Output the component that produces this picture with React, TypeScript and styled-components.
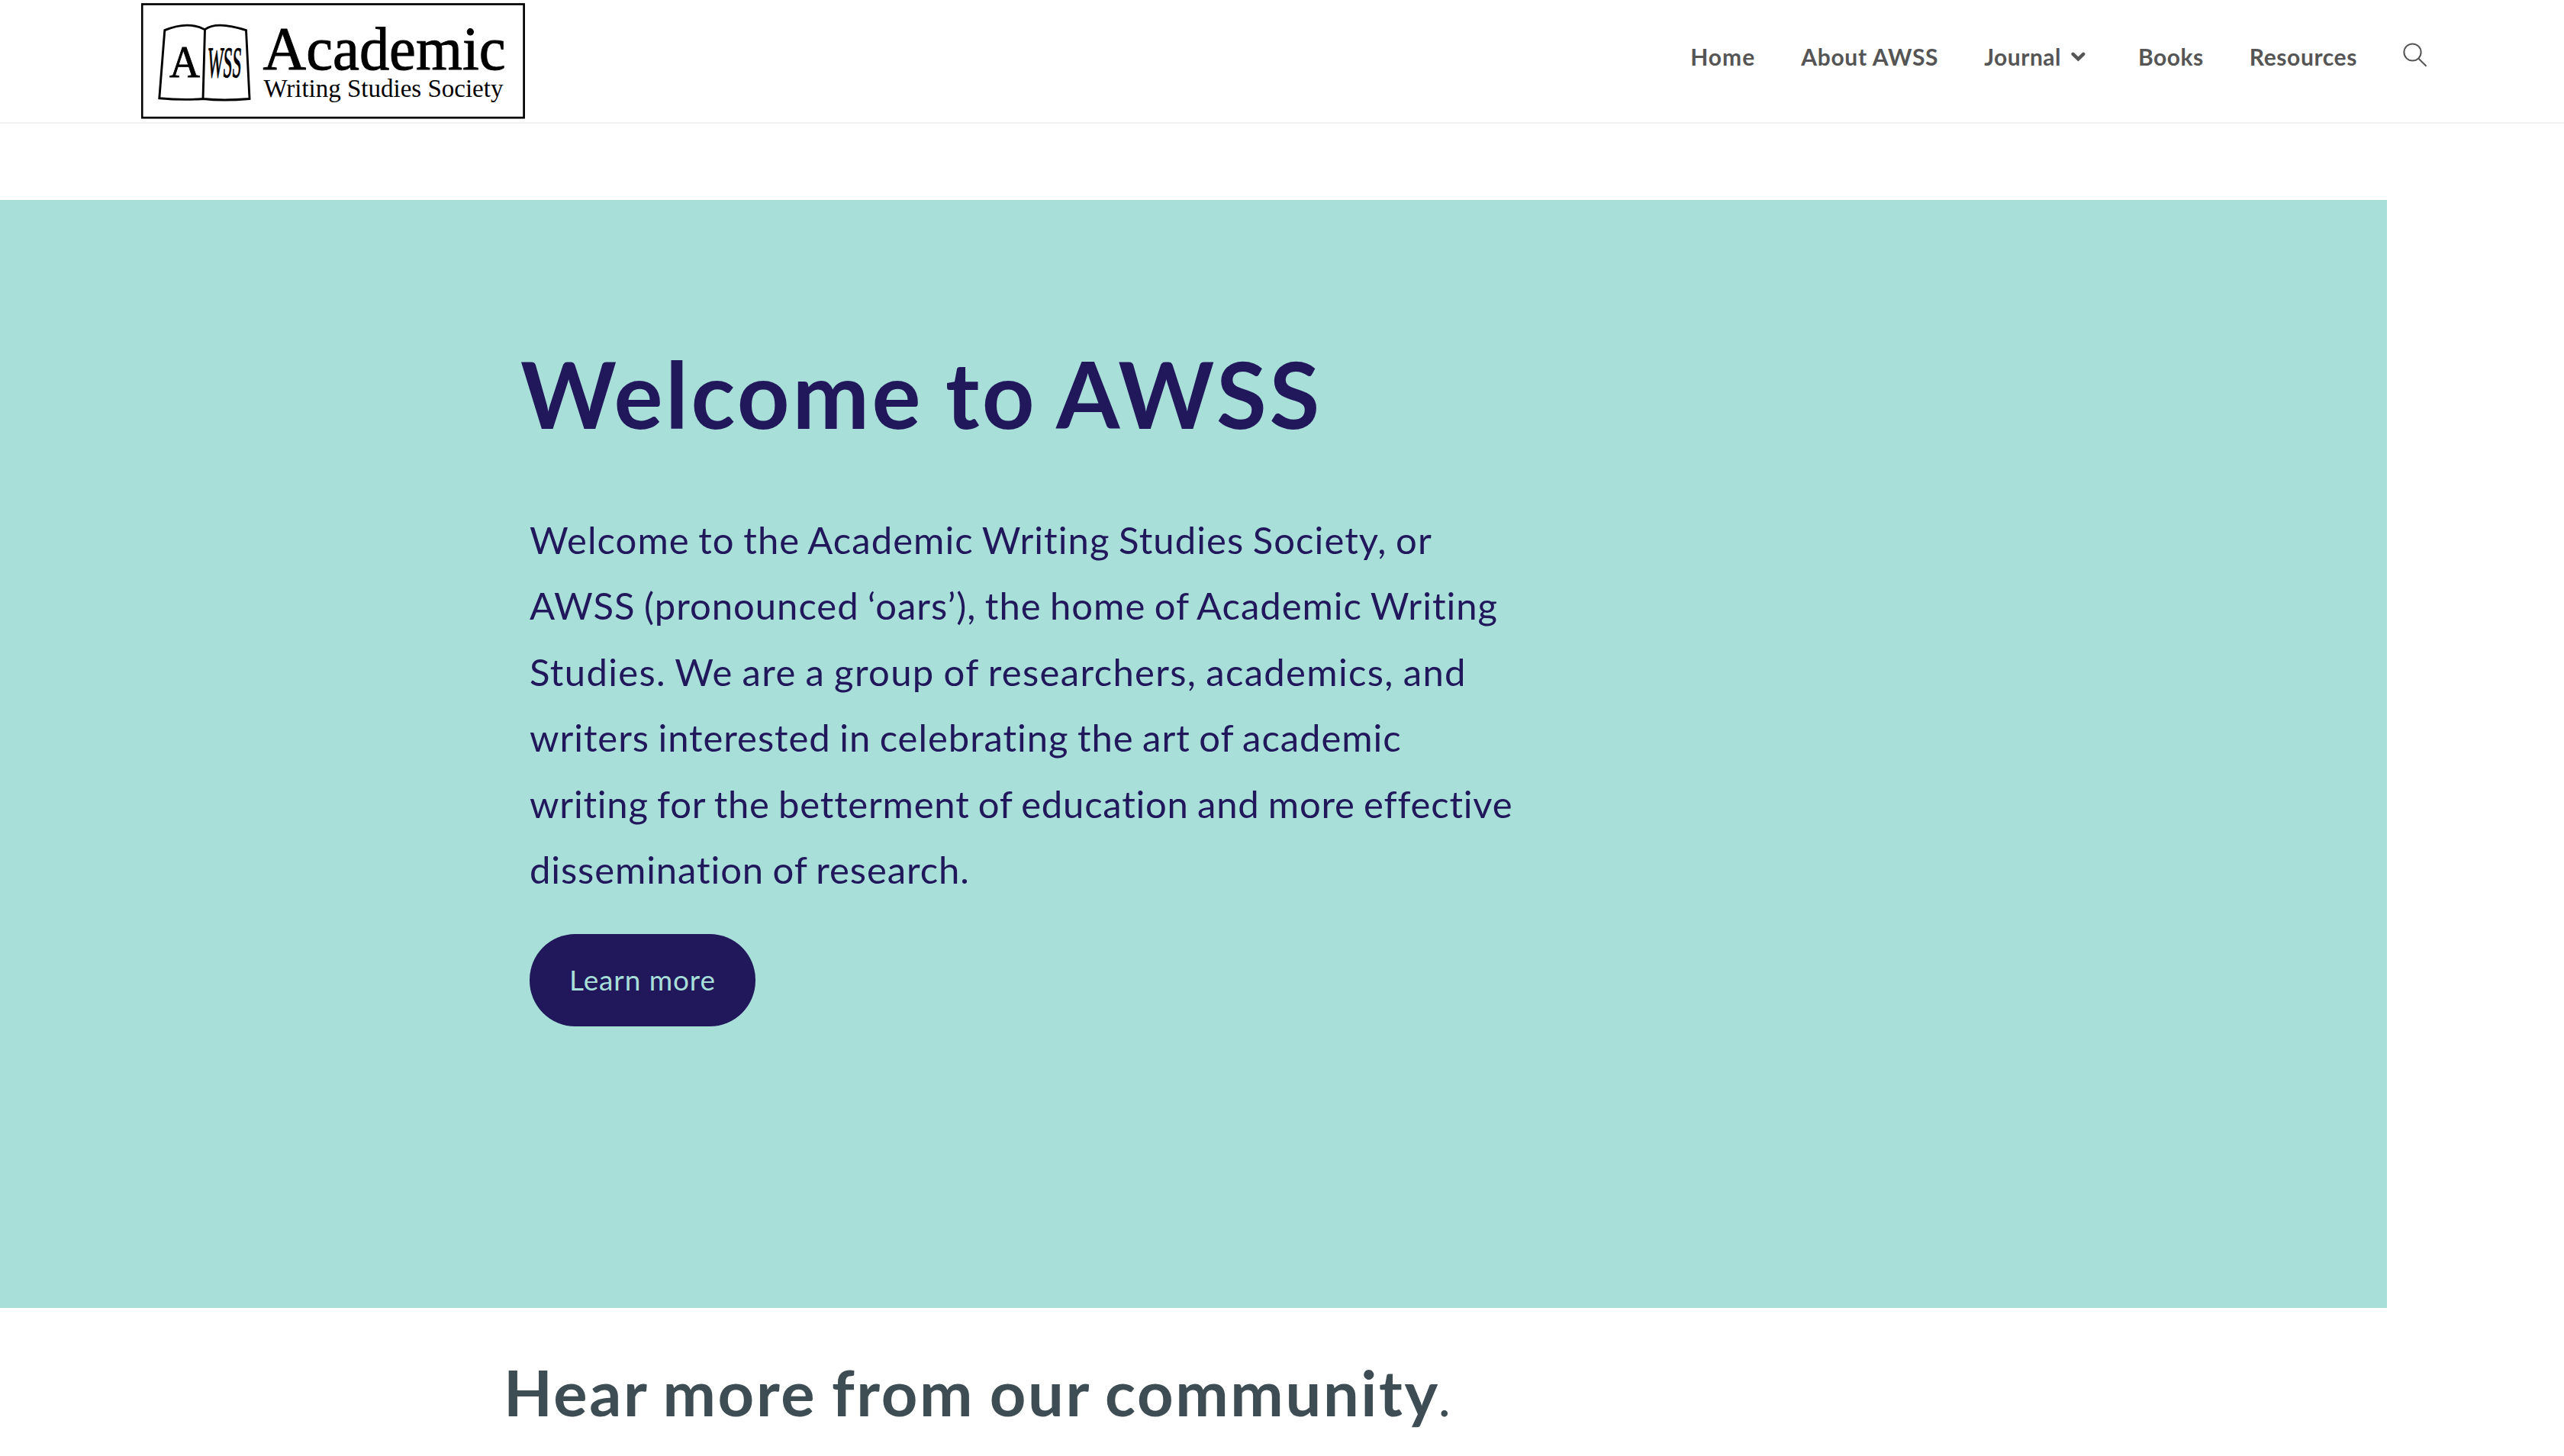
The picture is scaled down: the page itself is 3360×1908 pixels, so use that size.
import styled, { createGlobalStyle } from "styled-components"

const links = [
    { label: 'Home', spacing: 1 },
    { label: 'About AWSS', spacing: 0.7 },
    { label: 'Journal', spacing: 0.5, dropdown: true },
    { label: 'Books', spacing: 0.5 },
    { label: 'Resources', spacing: 0.6 },
]

const intro = [
    { text: 'Welcome to the Academic Writing Studies Society, or', spacing: 1.06 },
    { text: 'AWSS (pronounced ‘oars’), the home of Academic Writing', spacing: 0.97 },
    { text: 'Studies. We are a group of researchers, academics, and', spacing: 1.34 },
    { text: 'writers interested in celebrating the art of academic', spacing: 0.95 },
    { text: 'writing for the betterment of education and more effective', spacing: 0.78 },
    { text: 'dissemination of research.', spacing: 0.9 },
]

const Logo: React.FC = () => {
    return (
        <LogoSvg viewBox="185 4 504 152" role="img" aria-label="Academic Writing Studies Society">
            <rect x="186.2" y="5.5" width="500.4" height="148.7" fill="#fff" stroke="#000" strokeWidth="2.7" />
            <path
                d="M215.8 39.7 Q246 27 268.5 38.7 Q284 27 322.5 39.7 L327 129.5 Q292 132.5 266 129.5 Q240 131.5 208.8 128.8 Z M268.5 38.7 L266 129.5"
                fill="none"
                stroke="#000"
                strokeWidth="2.9"
            />
            <text x="222" y="100.8" fontSize="59" textLength="40" lengthAdjust="spacingAndGlyphs" stroke="#000" strokeWidth="0.8">A</text>
            <text
                x="272.3"
                y="100.8"
                fontSize="57"
                textLength="44.5"
                lengthAdjust="spacingAndGlyphs"
                stroke="#000"
                strokeWidth="1.2"
                transform="translate(5 0) skewX(-3.5)"
            >
                WSS
            </text>
            <text x="344.6" y="90.8" fontSize="80" textLength="318" lengthAdjust="spacingAndGlyphs" stroke="#000" strokeWidth="1">Academic</text>
            <text x="345.4" y="126.8" fontSize="33" textLength="314" lengthAdjust="spacingAndGlyphs">Writing Studies Society</text>
        </LogoSvg>
    )
}

const App: React.FC = () => {
    return (
        <Page>
            <GlobalStyle />
            <Header>
                <Logo />
                <Nav>
                    {links.map((link) => (
                        <NavLink key={link.label} href="#" $spacing={link.spacing}>
                            {link.label}
                            {link.dropdown && (
                                <Chevron viewBox="0 0 19 13">
                                    <path d="M2.6 2.8 L9.4 9.4 L16.2 2.8" />
                                </Chevron>
                            )}
                        </NavLink>
                    ))}
                    <SearchIcon viewBox="0 0 32 32">
                        <circle cx="12.5" cy="12.5" r="11.1" />
                        <path d="M20.4 20.8 L30.6 30.8" />
                    </SearchIcon>
                </Nav>
            </Header>
            <Hero>
                <HeroTitle>Welcome to AWSS</HeroTitle>
                <Intro>
                    {intro.map((line) => (
                        <Line key={line.text} $spacing={line.spacing}>{line.text}</Line>
                    ))}
                </Intro>
                <LearnMore href="#">Learn more</LearnMore>
            </Hero>
            <Community>
                Hear more from our community<span>.</span>
            </Community>
        </Page>
    )
}
export default App

const GlobalStyle = createGlobalStyle`
    * {
        box-sizing: border-box;
    }
    body {
        margin: 0;
        background: #fff;
        overflow: hidden;
    }
`
const Page = styled.div`
    height: 1908px;
    overflow: hidden;
    font-family: Lato, "Open Sans", sans-serif;
`
const Header = styled.header`
    display: flex;
    justify-content: space-between;
    height: 162px;
    padding: 4px 179px 0 185px;
    border-bottom: 2px solid #f1f1f1;
`
const LogoSvg = styled.svg`
    width: 504px;
    height: 152px;
    font-family: "Liberation Serif", serif;
`
const Nav = styled.nav`
    display: flex;
    align-items: flex-start;
    gap: 60px;
    padding-top: 50px;
`
const NavLink = styled.a<{ $spacing: number }>`
    display: flex;
    align-items: center;
    font-size: 30px;
    font-weight: 700;
    line-height: 40px;
    letter-spacing: ${(p) => p.$spacing}px;
    color: #555;
    text-decoration: none;
    white-space: nowrap;
`
const Chevron = styled.svg`
    width: 19px;
    height: 13px;
    margin: 0 9px 0 13px;
    path {
        fill: none;
        stroke: #555;
        stroke-width: 4.4;
        stroke-linejoin: miter;
        stroke-linecap: round;
    }
`
const SearchIcon = styled.svg`
    width: 32px;
    height: 32px;
    margin-top: 2px;
    fill: none;
    stroke: #555;
    stroke-width: 2;
`
const Hero = styled.section`
    width: 3128px;
    height: 1452px;
    margin-top: 100px;
    padding: 182px 0 0 694px;
    background: #a8dfd9;
    color: #21175b;
`
const HeroTitle = styled.h1`
    margin: 0 0 0 -12px;
    font-size: 120px;
    font-weight: 700;
    line-height: 144px;
    letter-spacing: 3.6px;
    word-spacing: -4px;
    white-space: nowrap;
`
const Intro = styled.p`
    margin: 76px 0 0;
    font-size: 49px;
    line-height: 86.4px;
    word-spacing: -2px;
`
const Line = styled.span<{ $spacing: number }>`
    display: block;
    letter-spacing: ${(p) => p.$spacing}px;
    white-space: nowrap;
`
const LearnMore = styled.a`
    display: flex;
    align-items: center;
    justify-content: center;
    width: 296px;
    height: 121px;
    margin-top: 42px;
    padding-bottom: 3px;
    border-radius: 60px;
    background: #21175b;
    color: #a8dfd9;
    font-size: 37px;
    letter-spacing: 0.9px;
    text-decoration: none;
`
const Community = styled.h2`
    margin: 60px 0 0 660px;
    font-size: 83px;
    font-weight: 700;
    line-height: 100px;
    letter-spacing: 2.6px;
    word-spacing: -3px;
    color: #3d4d53;
    white-space: nowrap;
    span {
        margin-left: -2px;
        font-size: 68px;
        font-weight: 400;
    }
`
